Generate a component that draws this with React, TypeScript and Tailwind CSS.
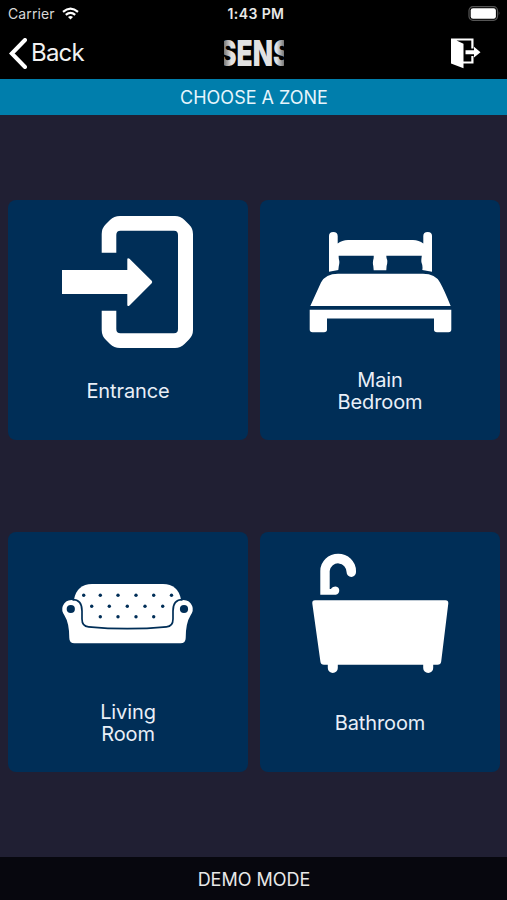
import type { ReactNode } from "react";

const EntranceIcon = () => (
    <svg width="240" height="160" viewBox="0 0 240 160" fill="#fff">
        <path d="M93.7 52.7V34Q93.7 28 98 24L102 20Q106 16 112 16H167Q172.500 16 176.500 20L181 24.500Q185 28.500 185 34V130Q185 135.500 181 139.500L176.500 144Q172.500 148 167 148H112Q106 148 102 144L98 140Q93.700 136 93.700 130V110.700H108.300V129Q108.300 133.300 112.500 133.300H166Q170 133.300 170 129V35Q170 30.700 166 30.700H112.500Q108.300 30.700 108.300 35V52.700Z" />
        <path d="M54 70H119.300V59.500Q119.300 57.500 121.500 58.700L143.700 80.800Q144.800 82 143.700 83.200L121.500 105.500Q119.300 107 119.300 104.800V94H54Z" />
    </svg>
);

const BedIcon = () => (
    <svg width="240" height="160" viewBox="0 0 240 160" fill="#fff">
        <path d="M69 71.700V36Q69 32 73.300 32T77.700 36V43.500Q82 40 88 40H153Q159 40 163.300 43.500V36Q163.300 32 167.700 32T172 36V71.700L162.300 70Q163 66 161.500 62.500Q161 61 161.800 55.700H126.300Q126.300 58 127.200 60Q127.600 63 126.600 66L126.300 70.300H113.700L113.300 66Q112.500 63 113.200 60Q113.900 58 113.700 55.700H78.700Q78.500 58 79.300 61Q79.600 63.500 78.800 66L78.300 70Z" />
        <path d="M50.300 106L61 82.500Q65.500 73.700 78 73.700H163Q175.500 73.700 180 82.500Q184 89.500 190.700 106Z" />
        <path d="M49.700 109.700H191.300V129.500Q191.300 132.300 188.500 132.300H177Q174 132.300 174 129.500V118.500H67V129.500Q67 132.300 64 132.300H52.500Q49.700 132.300 49.700 129.500Z" />
    </svg>
);

const studs = [
    { y: 63.3, xs: [75.7, 92.3, 110, 128, 145.7, 163.5] },
    { y: 74.3, xs: [83.7, 101.3, 119.3, 137, 154.7] },
    { y: 84.7, xs: [92.3, 110, 128, 145.7] },
];

const SofaIcon = () => (
    <svg width="240" height="160" viewBox="0 0 240 160" fill="#fff">
        <path d="M66 67.500Q69 52 84 52H155Q170 52 173 67.500L166 94Q143 96.500 119.300 96.500T73 94Z" />
        <path d="M61.300 106Q61.300 91 56.500 83.500Q53 78.500 54.800 74Q57.200 68 63.500 68Q73.800 69 73.800 80V87Q74 94.500 80.500 95Q119.300 99 158.500 95Q165 94.500 165.200 87V80Q165.200 69 175.500 68Q181.800 68 184.200 74Q186 78.500 182.500 83.500Q177.700 91 177.700 106Q177.700 111.300 172.500 111.300H66.500Q61.300 111.300 61.300 106Z" />
        <path
            d="M64.500 67.500Q74 67.500 74 79V87Q74 94.300 80.500 94.800Q119.300 98.500 158.500 94.800Q165 94.300 165 87V79Q165 67.500 174.500 67.500"
            fill="none"
            stroke="#002e57"
            strokeWidth="1.700"
        />
        <circle cx="62.8" cy="77" r="4.1" fill="#002e57" />
        <circle cx="176" cy="77" r="4.1" fill="#002e57" />
        {studs.map((row) =>
            row.xs.map((x) => <circle key={`${x}-${row.y}`} cx={x} cy={row.y} r="1.7" fill="#002e57" />)
        )}
    </svg>
);

const BathIcon = () => (
    <svg width="240" height="160" viewBox="0 0 240 160" fill="#fff">
        <path d="M60.300 62.700V39A17.800 17.300 0 0 1 96 39V40.300A4.700 4.700 0 0 1 86.600 40.300A8.500 9 0 0 0 69.700 39V57H71Q72 54.400 75.700 54.400A4.200 4.200 0 0 1 75.700 62.700Z" />
        <path d="M55 68.300H185.500Q188.500 68.300 188.300 71.500L181.200 129.500Q180.700 132.700 177.500 132.700H173.200V136A5 5 0 0 1 163.200 136V132.700H77.800V136A5 5 0 0 1 67.800 136V132.700H64Q60.800 132.700 60.400 129.500L52.300 71.500Q52 68.300 55 68.300Z" />
    </svg>
);

const ZoneCard = ({ icon, children }: { icon: ReactNode; children: ReactNode }) => (
    <button className="flex h-60 w-60 flex-col rounded-[8px] bg-[#002e57]">
        {icon}
        <span className="flex h-[62px] w-full items-center justify-center text-center text-[20px] leading-[22px] tracking-[-0.1px] text-[#e9eff7]">
            <span>{children}</span>
        </span>
    </button>
);

const App = () => {
    return (
        <div className="flex h-[900px] w-[507px] flex-col bg-[#201f33] font-['Inter',sans-serif] text-white">
            <header className="h-[79px] bg-black">
                <div className="grid h-[27px] grid-cols-3 items-center">
                    <div className="flex items-center gap-[7px] pl-[8px] text-[14px] tracking-[0.1px] text-[#d8d8d8]">
                        Carrier
                        <svg width="17" height="13" viewBox="0 0 17 13" fill="none" stroke="#fff" strokeWidth="2.2">
                            <path d="M1 4.800Q8.500-1.600 16 4.800" />
                            <path d="M3.800 7.900Q8.500 3.800 13.200 7.900" />
                            <path d="M8.500 12.500L6 10Q8.500 7.900 11 10Z" fill="#fff" stroke="none" />
                        </svg>
                    </div>
                    <div className="pl-[5px] text-center text-[14px] font-semibold tracking-[0.4px] text-[#e8e8e8]">1:43 PM</div>
                    <div className="flex justify-end pr-[6px]">
                        <svg width="33" height="15" viewBox="0 0 33 15">
                            <rect x="1" y="0.700" width="28.500" height="13.600" rx="4" fill="none" stroke="#555" strokeWidth="1.200" />
                            <rect x="2.700" y="2.300" width="25.200" height="10.400" rx="2.300" fill="#fff" />
                            <path d="M30.800 5.300Q32.300 7.500 30.800 9.700Z" fill="#777" />
                        </svg>
                    </div>
                </div>
                <div className="grid h-[52px] grid-cols-3 items-center">
                    <button className="flex items-center gap-[4px] pl-[9px] text-[24px] leading-[50px] tracking-[-0.8px] text-[#f1f1f1]">
                        <svg width="18" height="31" viewBox="0 0 18 31" fill="none" stroke="#fff" strokeWidth="4">
                            <path d="M16 2L2.800 15.500L16 29" strokeLinecap="round" />
                        </svg>
                        Back
                    </button>
                    <svg className="mx-auto" width="76" height="36" viewBox="-8 0 76 36">
                        <defs>
                            <linearGradient id="fade" gradientUnits="userSpaceOnUse" x1="0" y1="0" x2="60" y2="0">
                                <stop offset="0" stopColor="#000" />
                                <stop offset="0" stopColor="#777" />
                                <stop offset="0.120" stopColor="#e2e2e2" />
                                <stop offset="0.880" stopColor="#e2e2e2" />
                                <stop offset="1" stopColor="#777" />
                                <stop offset="1" stopColor="#000" />
                            </linearGradient>
                        </defs>
                        <text
                            x="-5"
                            y="30.5"
                            fontSize="36"
                            fontWeight="900"
                            textLength="71.5"
                            lengthAdjust="spacingAndGlyphs"
                            fill="url(#fade)"
                        >
                            SENS
                        </text>
                    </svg>
                    <div className="flex justify-end pr-[26px]">
                        <svg width="31" height="31" viewBox="0 0 31 31" fill="#fff">
                            <path d="M1 0.500H23.500V10.500H21.300V2.500H6.500L13.500 5.800V23.500H21.300V18H23.500V25.500H13.500V30.300L1 25.500Z" />
                            <path d="M15.500 12.300H24V8.800L30.500 14.200L24 19.500V16.300H15.500Z" />
                        </svg>
                    </div>
                </div>
            </header>

            <h1 className="flex h-9 items-center justify-center bg-[#007eac] pt-px pl-px text-[18px] text-[#e6f5fc]">CHOOSE A ZONE</h1>

            <main className="grid flex-1 grid-cols-[240px_240px] content-center justify-center gap-x-3 gap-y-[92px] pl-[1px]">
                <ZoneCard icon={<EntranceIcon />}>Entrance</ZoneCard>
                <ZoneCard icon={<BedIcon />}>
                    Main
                    <br />
                    Bedroom
                </ZoneCard>
                <ZoneCard icon={<SofaIcon />}>
                    Living
                    <br />
                    Room
                </ZoneCard>
                <ZoneCard icon={<BathIcon />}>Bathroom</ZoneCard>
            </main>

            <footer className="flex h-[43px] items-center justify-center bg-[#07070e] pt-px pl-px text-[18px] text-[#e8e8e8]">DEMO MODE</footer>
        </div>
    );
};

export default App;
